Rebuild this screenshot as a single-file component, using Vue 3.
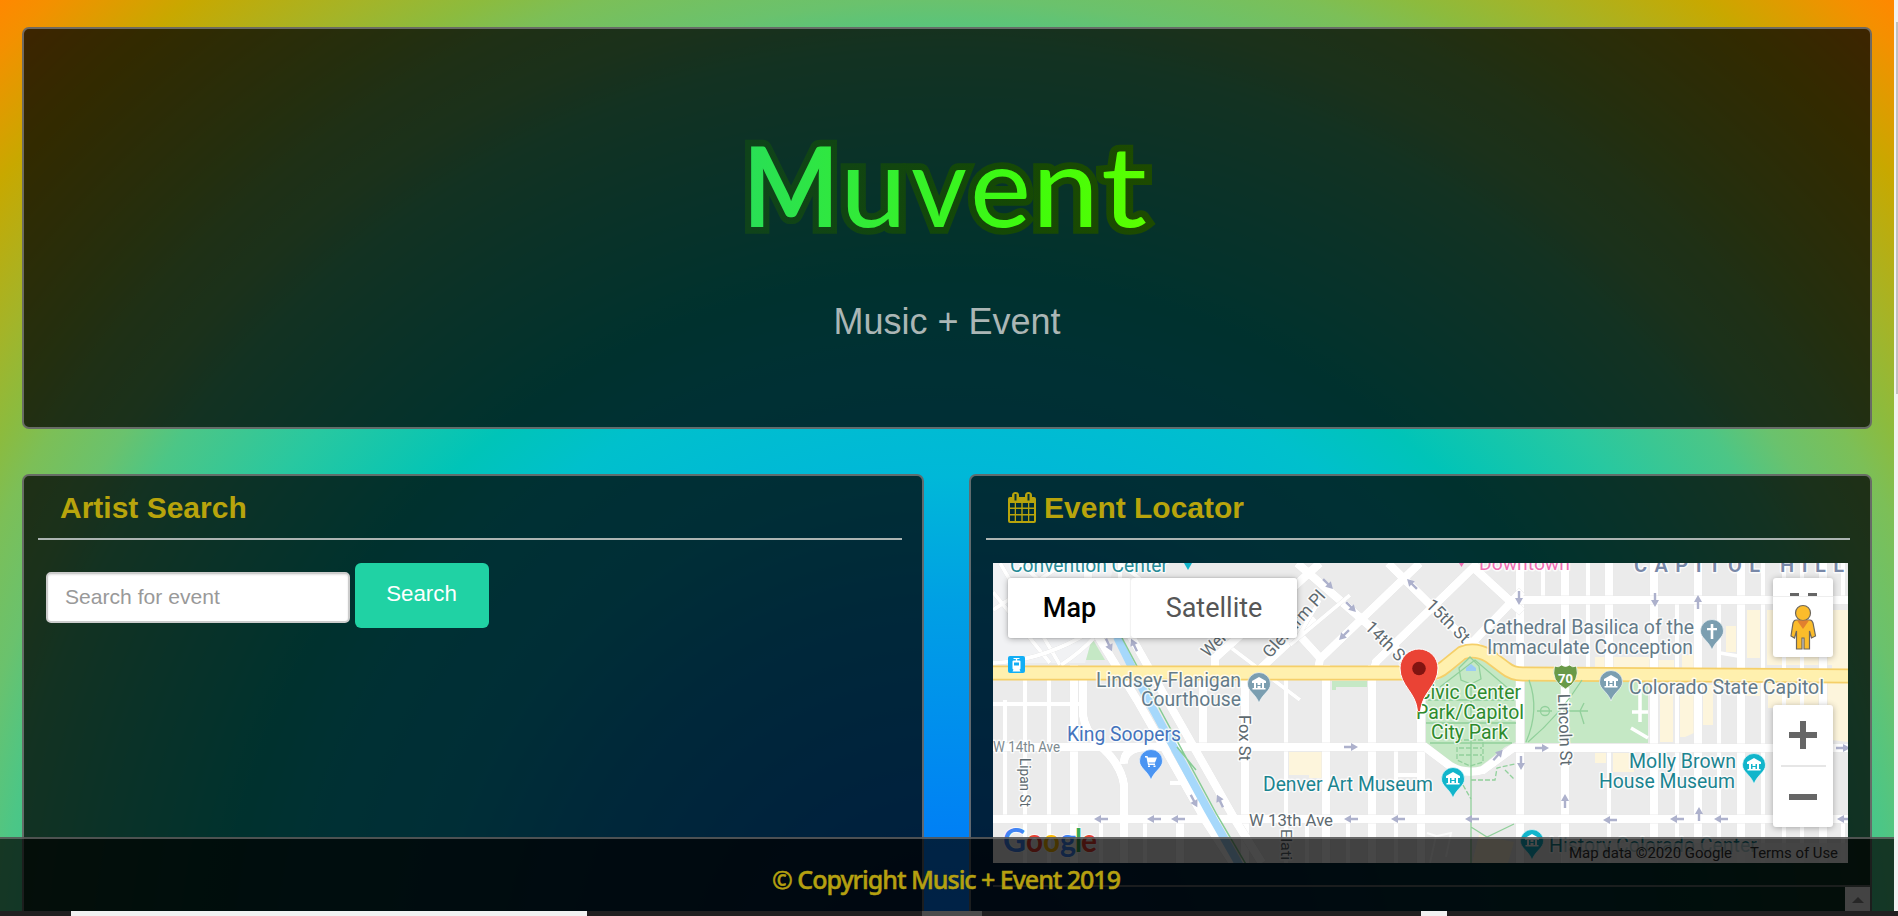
<script setup>
const logo = [
  { c: 'M', x: 743, w: 96 },
  { c: 'u', x: 840, w: 67 },
  { c: 'v', x: 911, w: 56 },
  { c: 'e', x: 970, w: 61 },
  { c: 'n', x: 1032, w: 67 },
  { c: 't', x: 1101, w: 46 },
]
const vThin = [[1005, 700, 819], [1025, 680, 863], [1049, 680, 863], [1101, 823, 863], [1145, 823, 863], [1286, 680, 863], [1307, 823, 863], [1348, 819, 863], [1396, 747, 863], [1543, 563, 600], [1588, 563, 668], [1609, 747, 863], [1677, 600, 863], [1719, 600, 863], [1763, 563, 863], [1784, 563, 863], [1802, 563, 863], [1843, 563, 600], [1843, 819, 863]]
const vWide = [[1074, 665, 863], [1180, 823, 863], [1203, 680, 747], [1245, 680, 863], [1326, 665, 863], [1372, 665, 863], [1421, 678, 863], [1520, 563, 863], [1565, 563, 863], [1609, 563, 668], [1654, 563, 863], [1698, 563, 863], [1741, 563, 863], [1823, 563, 863]]
const arrows = [
  [1101, 819, 180], [1154, 819, 180], [1178, 819, 180], [1351, 819, 180], [1398, 819, 180], [1472, 819, 180],
  [1610, 820, 180], [1677, 819, 180], [1721, 819, 180], [1844, 819, 180], [1351, 747, 0], [1542, 748, 0], [1843, 748, 0],
  [1519, 598, 90], [1521, 763, 90], [1565, 801, -90], [1699, 814, -90], [1655, 600, 90], [1698, 602, -90],
  [1328, 584, 45], [1351, 607, 45], [1344, 635, 135], [1412, 584, 225], [1109, 645, 65], [1134, 645, -115],
  [1194, 801, 62], [1220, 801, -115], [1498, 755, -48],
]
const labels = [
  ['Convention Center', 1010, 572, 158, 20, '#258a96'],
  ['Downtown', 1479, 570, 91, 19, '#f06eb4'],
  ['Lindsey-Flanigan', 1096, 686.5, 145, 20, '#647b89'],
  ['Courthouse', 1141, 706, 100, 20, '#647b89'],
  ['King Soopers', 1067, 740.5, 114, 20, '#4474bd'],
  ['Denver Art Museum', 1263, 790.5, 170, 20, '#1b8490'],
  ['Cathedral Basilica of the', 1483, 633.5, 211, 20, '#647b89'],
  ['Immaculate Conception', 1487, 653.5, 206, 20, '#647b89'],
  ['Colorado State Capitol', 1629, 693.5, 195, 20, '#647b89'],
  ['Molly Brown', 1629, 767.5, 107, 20, '#1b8490'],
  ['House Museum', 1599, 787.5, 136, 20, '#1b8490'],
  ['Civic Center', 1418, 699, 103, 20, '#2d8a2d'],
  ['Park/Capitol', 1416, 718.5, 108, 20, '#2d8a2d'],
  ['City Park', 1431, 738.5, 77, 20, '#2d8a2d'],
  ['W 14th Ave', 993, 751.5, 67, 14.5, '#7d8a8f'],
  ['W 13th Ave', 1249, 825.5, 84, 17, '#5e6a70'],
  ['History Colorado Center', 1549, 852, 208, 20, '#1b8490'],
]
const streets = [
  ['Lipan St', 1020, 758, 49, 14, 90],
  ['Fox St', 1239, 715, 46, 17, 90],
  ['Elati St', 1281, 829, 50, 14, 90],
  ['Lincoln St', 1558, 694, 72, 17, 88],
  ['14th St', 1364, 628, 54, 17, 45],
  ['15th St', 1425, 606, 54, 17, 45],
  ['Glenarm Pl', 1270, 659, 84, 17, -48],
  ['Welton', 1208, 658, 50, 17, -45],
]
const pins = [
  [1259, 684, '#7b9eb0', 'b'], [1611, 682, '#7b9eb0', 'b'], [1712, 631, '#7b9eb0', 'c'], [1151, 761, '#4a94f2', 's'],
  [1453, 779, '#12b5cb', 'b'], [1754, 765, '#12b5cb', 'b'], [1532, 841, '#12b5cb', 'b'],
]
const google = [['G', '#4285f4', 1003, 23], ['o', '#ea4335', 1026, 17], ['o', '#fbbc05', 1043, 17], ['g', '#4285f4', 1060, 16], ['l', '#34a853', 1075, 7], ['e', '#ea4335', 1081, 16]]
</script>

<template>
  <div class="screen">
    <div class="page">
      <section class="hero panel">
        <svg class="logo" viewBox="735 120 425 125" role="img" aria-label="Muvent">
          <defs>
            <linearGradient id="lg" gradientUnits="userSpaceOnUse" x1="750" y1="0" x2="1150" y2="0">
              <stop offset="0" stop-color="#29df55" /><stop offset=".7" stop-color="#3ffc0c" /><stop offset="1" stop-color="#5cff00" />
            </linearGradient>
            <linearGradient id="ls" gradientUnits="userSpaceOnUse" x1="750" y1="0" x2="1150" y2="0">
              <stop offset="0" stop-color="#0f431a" /><stop offset=".6" stop-color="#144806" /><stop offset="1" stop-color="#1d4a00" />
            </linearGradient>
          </defs>
          <text v-for="l in logo" :key="l.x" :class="{ cap: l.c === 'M' }" :x="l.x" y="227" :textLength="l.w" lengthAdjust="spacingAndGlyphs">{{ l.c }}</text>
        </svg>
        <p class="tagline">Music + Event</p>
      </section>

      <div class="columns">
        <section class="panel col">
          <h2>Artist Search</h2>
          <div class="form">
            <input type="text" placeholder="Search for event">
            <button>Search</button>
          </div>
        </section>

        <section class="panel col">
          <h2>
            <svg class="cal" viewBox="0 0 28 31">
              <path fill="currentColor" fill-rule="evenodd" d="M2 5H4V3.500Q4 0 7.500 0T11 3.500V5H17V3.500Q17 0 20.500 0T24 3.500V5H26Q28 5 28 7V29Q28 31 26 31H2Q0 31 0 29V7Q0 5 2 5ZM6.500 2V8.500H8.500V2ZM19.500 2V8.500H21.500V2ZM2 11V15.500H6.700V11ZM8 11V15.500H13.300V11ZM14.700 11V15.500H20V11ZM21.300 11V15.500H26V11ZM2 17V22H6.700V17ZM8 17V22H13.300V17ZM14.700 17V22H20V17ZM21.300 17V22H26V17ZM2 23.500V29H6.700V23.500ZM8 23.500V29H13.300V23.500ZM14.700 23.500V29H20V23.500ZM21.300 23.500V29H26V23.500Z" />
            </svg>Event Locator
          </h2>
          <div class="map">
            <svg class="tiles" viewBox="993 563 855 300">
              <rect x="993" y="563" width="855" height="300" fill="#ebebeb" />
              <path d="M993 563H1115L1085 663H993Z" fill="#f1f2f4" />
              <g fill="#fdf5dc">
                <path d="M1289 752H1323V778H1309V775H1289ZM1747 610H1760V658H1747ZM1767 610H1848V742L1832 740V665H1767ZM1726 626H1736V652H1726ZM1595 657H1650V668H1595ZM1658 660H1674V668H1658ZM1682 655H1694V668H1682ZM1660 685H1673V742H1660ZM1680 685H1694V733L1685 737H1680ZM1703 685H1713V725H1703ZM1747 683H1760V696H1747ZM1768 683H1848V708H1768ZM1595 753H1606V763H1595ZM1613 753H1634V772H1613Z" />
                <path d="M1479 835L1514 842L1508 863H1472Z" />
              </g>
              <g fill="#c5e8c5">
                <path d="M1426 680H1438L1468 655H1482L1512 680H1516V742L1505 747L1480 767Q1466 771 1455 768L1426 745Z" />
                <path d="M1525 681H1648V743H1525ZM1332 681H1367V687H1336V690H1332ZM1092 638L1105 660H1086Z" />
              </g>
              <path d="M1000 563L1060 665M993 592L1050 663M993 610L1065 563M1020 563L1083 620L1150 605M1080 563L1120 622" class="road thin" />
              <path d="M1061 665Q1100 640 1120 600V563M1119 563L1300 700M993 663Q1050 660 1100 625" class="road thin" />
              <path v-for="(v, i) in vThin" :key="'t' + i" :d="`M${v[0]} ${v[1]}V${v[2]}`" class="road thin" />
              <path v-for="(v, i) in vWide" :key="'w' + i" :d="`M${v[0]} ${v[1]}V${v[2]}`" class="road wide" />
              <g class="road wide">
                <path d="M993 747H1425L1450 766Q1465 775 1483 770L1513 748H1848M993 819H1848M1520 600H1848" />
                <path d="M1088 563L1088 620L1137 700L1207 823L1233 863M1116 610L1167 700L1237 823L1262 863" />
                <path d="M1083 680V715Q1085 730 1098 744Q1121 763 1124 785V863M1124 764Q1123 749 1145 747" />
                <path d="M1318 670L1320 659L1420 563M1374 670L1376 662L1478 563M1470 645L1522 591M1297 563L1410 661M1388 563L1464 638L1505 665M1473 567L1522 612M1290 625L1322 660M1215 670V658L1320 563M1260 669L1315 618" />
              </g>
              <path d="M993 704H1083M1320 600L1296 640M1290 645L1350 595M1396 775H1421M1170 783H1185" class="road thin" />
              <path d="M1117 637L1148 700L1208 810L1240 866" stroke="#a6d8fb" stroke-width="8" fill="none" />
              <path d="M1121 636L1155 700L1217 815L1247 866M1177 747L1196 770" stroke="#86cc94" stroke-width="1.500" fill="none" />
              <path d="M993 673H1430Q1438 673 1446 666L1462 653Q1475 648 1489 656L1505 668Q1512 674 1523 674L1848 676" stroke="#f5cf69" stroke-width="15" fill="none" />
              <path d="M993 673H1430Q1438 673 1446 666L1462 653Q1475 648 1489 656L1505 668Q1512 674 1523 674L1848 676" stroke="#fff0ae" stroke-width="11.500" fill="none" />
              <g stroke="#91d09b" stroke-width="1.300" fill="none">
                <path d="M1470 657L1459 668L1461 680L1471 684L1481 679L1479 666ZM1440 687L1475 660L1510 690M1426 723H1516M1430 743H1512M1428 700H1514M1471 684V863M1471 827L1487 837L1514 824" />
                <path d="M1457 740H1483V762L1470 766L1457 760ZM1459 748H1482M1459 755H1482M1471 780L1495 780L1497 768L1515 764M1505 770L1514 779M1463 785L1471 799" stroke-dasharray="5 2" />
                <path d="M1529 680Q1540 710 1526 742M1582 680Q1560 715 1528 742M1563 711H1588M1537 711H1552M1584 703L1580 711L1584 724" />
                <circle cx="1545" cy="711" r="4.500" />
              </g>
              <path d="M1466 668L1471 664L1476 668V671H1466Z" fill="#9cccf5" />
              <path d="M1632 712H1648M1640 680V722M1631 728L1648 738M1720 653L1738 656" stroke="#fff" stroke-width="3.500" />
              <path d="M1427 833L1436 836L1430 863M1437 836L1451 833L1446 857" stroke="#fafafa" stroke-width="2" fill="none" />
              <g v-for="(a, i) in arrows" :key="'a' + i" :transform="`translate(${a[0]} ${a[1]}) rotate(${a[2]})`">
                <path d="M-7 -1.200H0V-4L7 0L0 4V1.200H-7Z" fill="#adb1cc" />
              </g>
              <g class="label">
                <text v-for="(l, i) in labels" :key="'l' + i" :x="l[1]" :y="l[2]" :textLength="l[3]" lengthAdjust="spacingAndGlyphs" :font-size="l[4]" :fill="l[5]">{{ l[0] }}</text>
                <text x="1634" y="571.500" textLength="210" font-size="20" font-weight="600" fill="#7888a8">CAPITOL HILL</text>
                <text v-for="(s, i) in streets" :key="'s' + i" :transform="`translate(${s[1]} ${s[2]}) rotate(${s[5]})`" :textLength="s[3]" lengthAdjust="spacingAndGlyphs" :font-size="s[4]" fill="#5e6a70">{{ s[0] }}</text>
              </g>
              <path d="M1184 563H1192L1188 570Z" fill="#12b5cb" />
              <path d="M1459 563H1464L1461.500 567Z" fill="#f06eb4" />
              <g v-for="(p, i) in pins" :key="'p' + i" :transform="`translate(${p[0]} ${p[1]})`">
                <path d="M-11.500 0A11.500 11.500 0 1 1 11.500 0C11.500 7 3 10 0 19C-3 10 -11.500 7 -11.500 0Z" :fill="p[2]" stroke="#fff" stroke-opacity=".6" stroke-width="1" />
                <path v-if="p[3] === 'b'" fill="#fff" d="M0 -7L7 -3V-1H5V4H6.500V5.500H-6.500V4H-5V-1H-7V-3ZM-3 -1V4H-1.500V-1ZM1.500 -1V4H3V-1ZM-1.500 1V2H1.500V1Z" />
                <path v-else-if="p[3] === 'c'" fill="#fff" d="M-1.300 -7H1.300V-3H5V-.7H1.300V8H-1.300V-.7H-5V-3H-1.300Z" />
                <path v-else fill="#fff" d="M-6 -5H-3.500L-3 -3.500H6L4 1.500H-2.500L-2 2.500H4V4H-3L-4.500 -3.500H-6ZM-3 4.500H-1V6H-3ZM2.500 4.500H4.500V6H2.500Z" />
              </g>
              <g transform="translate(1016.500 664.500)">
                <rect x="-8.500" y="-8.500" width="17" height="17" rx="2" fill="#12aef5" />
                <path fill="#fff" fill-rule="evenodd" d="M-3 -6.500H3V-5.500H.7V-4H3Q4 -4 4 -3V4Q4 5 3 5L4 7H-4L-3 5Q-4 5 -4 4V-3Q-4 -4 -3 -4H-.7V-5.500H-3ZM-2.500 -2V1H2.500V-2Z" />
              </g>
              <g transform="translate(1565.500 676)">
                <path d="M-11 -10Q-7 -8 -4 -11Q0 -8 4 -11Q7 -8 11 -10Q15 5 0 13Q-15 5 -11 -10Z" fill="#699a48" stroke="#fff" stroke-width=".8" />
                <text class="shield" y="7" text-anchor="middle">70</text>
              </g>
              <path d="M1417.500 711C1416 692 1400 686 1400 668A19 19 0 1 1 1438 668C1438 686 1422 692 1420.500 711Q1419 713 1417.500 711Z" fill="#ea4335" stroke="#fff" stroke-width="1" />
              <circle cx="1419" cy="668.500" r="6.800" fill="#811411" />
              <g class="google">
                <text v-for="(g, i) in google" :key="'g' + i" :x="g[2]" y="852" :fill="g[1]" :textLength="g[3]" lengthAdjust="spacingAndGlyphs">{{ g[0] }}</text>
              </g>
              <rect x="1562" y="843" width="286" height="20" fill="#f5f5f5" fill-opacity=".7" />
              <g class="legal">
                <text x="1569" y="858" textLength="163" lengthAdjust="spacingAndGlyphs">Map data ©2020 Google</text>
                <text x="1750" y="858" textLength="88" lengthAdjust="spacingAndGlyphs">Terms of Use</text>
              </g>
            </svg>
            <div class="types"><button class="active">Map</button><button>Satellite</button></div>
            <div class="pegman">
              <div class="dashes"><i /><i /></div>
              <svg viewBox="-15 -24 30 48">
                <g fill="#fbbc2b" stroke="#6d665c" stroke-width="1.200">
                  <path d="M-7 -7H7Q9 -7 10 -4L12.500 9L8.500 11L6.500 4V22H1V11H-1V22H-6.500V4L-8.500 11L-12 9L-10 -4Q-9 -7 -7 -7Z" />
                  <circle cy="-14" r="7.500" />
                </g>
                <path d="M-6 -6.500H6L0 2Z" fill="#e1802f" />
              </svg>
            </div>
            <div class="zoom"><button class="plus" aria-label="Zoom in" /><hr><button aria-label="Zoom out" /></div>
          </div>
          <div class="results"><span class="up"><i /></span></div>
        </section>
      </div>
    </div>
    <div class="scroll"><i /></div>
    <footer><span>© Copyright Music + Event 2019</span></footer>
    <div class="strip"><i class="s1" /><i class="s2" /><i class="s3" /></div>
  </div>
</template>

<style>
html, body { margin: 0; overflow: hidden; }
</style>

<style scoped>
* { box-sizing: border-box; }
.screen { position: relative; width: 1898px; height: 916px; overflow: hidden; font-family: "Liberation Sans", Arial, sans-serif; }
.page {
  width: 1894px; height: 911px; overflow: hidden; padding: 27px 22px 0;
  background: radial-gradient(circle 1377px at 50% 1000px, #0070ff 0%, #0080f5 12%, #00a0e4 29%, #00b8d8 38%, #00c0cc 47%, #00c4b8 52.5%, #28c8a0 61.5%, #4cc686 69%, #6ac26d 72.600%, #7cbf57 77%, #8cbb3e 80%, #a4b428 84%, #c8a800 91%, #f49000 97.5%, #ff8800 100%);
}
.panel { border: 2px solid rgba(128, 128, 128, .75); border-radius: 7px; background: rgba(0, 0, 0, .75); }
.hero { height: 402px; display: flex; flex-direction: column; align-items: center; padding-top: 91px; }
.logo { width: 425px; height: 125px; margin-left: 1px; flex: none; overflow: visible; }
.logo text { font: 400 112px Lato, sans-serif; fill: url(#lg); stroke: url(#ls); stroke-width: 13.5px; paint-order: stroke; }
.logo .cap { font-weight: 700; }
.tagline { margin: 56px 0 0; font-size: 36px; line-height: 41px; color: #abb6b5; }
.columns { display: grid; grid-template-columns: 902px 903px; gap: 45px; margin-top: 45px; }
.col { height: 600px; padding: 0 20px 0 14px; }
h2 { display: flex; align-items: center; gap: 8px; height: 64px; margin: 0; padding: 1px 0 0 22px; font-size: 30px; line-height: 61px; color: #b8a40c; border-bottom: 2px solid #acb4b2; }
.col + .col h2 { margin-left: 1px; }
.cal { width: 28px; height: 31px; }
.form { display: flex; gap: 5px; margin: 23px 0 0 8px; align-items: center; }
input { width: 304px; height: 51px; margin-top: 4px; padding: 0 17px 1px; border: 2px solid #ccc; border-radius: 5px; background: #fff; box-shadow: inset 0 1px 2px rgba(0, 0, 0, .12); font: 21.1px "Liberation Sans", Arial, sans-serif; }
input::placeholder { color: #999; opacity: 1; }
.form button { width: 134px; height: 65px; padding: 0 1px 3px 0; border: 0; border-radius: 6px; background: #20d2a4; color: #fff; font: 22.3px "Liberation Sans", Arial, sans-serif; }
.map { position: relative; width: 855px; height: 300px; margin: 23px 0 0 8px; overflow: hidden; font-family: Roboto, sans-serif; }
.tiles { display: block; width: 855px; height: 300px; font-family: Roboto, sans-serif; }
.road { fill: none; stroke: #fff; }
.thin { stroke-width: 4px; }
.wide { stroke-width: 8.5px; }
.road.wide, .road.thin { filter: drop-shadow(0 0 .5px #ccc); }
.label text { stroke: #fff; stroke-opacity: .75; stroke-width: 3px; paint-order: stroke; stroke-linejoin: round; }
.shield { font: 700 13px "Open Sans", sans-serif; fill: #fff; }
.google text { font: 700 33px Lato, sans-serif; stroke: #fff; stroke-opacity: .7; stroke-width: 2px; paint-order: stroke; }
.legal text { font-size: 15.5px; fill: #333; }
.types { position: absolute; left: 15px; top: 15px; display: flex; height: 60px; border-radius: 3px; background: #fff; box-shadow: 0 1px 6px rgba(0, 0, 0, .3); }
.types button { width: 166px; border: 0; border-radius: 3px; background: #fff; color: #565656; font: 27px Roboto, sans-serif; padding: 0; box-shadow: 0 0 2px rgba(0, 0, 0, .2); }
.types .active { width: 123px; color: #000; font-weight: 500; }
.pegman { position: absolute; left: 780px; top: 15px; width: 60px; height: 79px; border-radius: 3px; background: #fff; box-shadow: 0 1px 6px rgba(0, 0, 0, .3); display: flex; flex-direction: column; align-items: center; }
.dashes { display: flex; gap: 9px; width: 60px; height: 19px; justify-content: center; align-items: flex-end; border-bottom: 1px solid #eee; }
.dashes i { width: 9px; height: 3px; background: #666; }
.pegman svg { width: 30px; height: 48px; margin-top: 6px; }
.zoom { position: absolute; left: 780px; top: 142px; width: 60px; height: 122px; border-radius: 3px; background: #fff; box-shadow: 0 1px 6px rgba(0, 0, 0, .3); }
.zoom button { display: block; width: 60px; height: 60px; border: 0; padding: 0; background: linear-gradient(#666, #666) center / 28px 6px no-repeat; }
.zoom .plus { background: linear-gradient(#666, #666) center / 28px 6px no-repeat, linear-gradient(#666, #666) center / 6px 28px no-repeat; }
.zoom hr { width: 45px; height: 2px; margin: 0 auto; border: 0; background: #e6e6e6; }
.results { height: 60px; margin: 22px -20px 0 8px; border-top: 2px solid rgba(128, 128, 128, .75); }
.up { display: flex; align-items: center; justify-content: center; width: 25px; height: 25px; margin-left: auto; background: #f1f1f1; }
.up i { border: 6px solid transparent; border-top: 0; border-bottom-color: #888; }
.scroll { position: absolute; right: 0; top: 0; width: 4px; height: 911px; background: #f1f1f1; }
.scroll i { display: block; width: 2px; height: 372px; margin: 22px 0 0 2px; background: #c1c1c1; }
footer { position: absolute; left: 0; top: 837px; width: 1894px; height: 74px; border-top: 2px solid rgba(128, 128, 128, .6); background: rgba(0, 0, 0, .72); display: flex; justify-content: center; font: 500 25px/80px "Noto Sans", sans-serif; color: #b5a010; letter-spacing: -1.03px; white-space: nowrap; -webkit-text-stroke: .5px #b5a010; }
footer span { margin-right: 2px; }
.strip { position: absolute; left: 0; top: 911px; width: 1898px; height: 5px; background: #211f20; display: grid; grid-template-columns: 71px 516px 335px 60px 439px 26px; }
.strip i { height: 5px; }
.s1 { grid-column: 2; background: #f1f1f1; }
.s2 { grid-column: 4; background: #4b4b4b; }
.s3 { grid-column: 6; background: #f1f1f1; }
</style>
